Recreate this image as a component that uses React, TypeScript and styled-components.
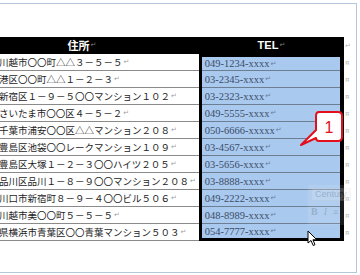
import React from "react";
import styled, { createGlobalStyle } from "styled-components";

const GlobalStyle = createGlobalStyle`
  html, body { margin: 0; padding: 0; background: #ffffff; }
  body { width: 360px; height: 275px; overflow: hidden; }
  #root { width: 360px; height: 275px; }
`;

const Screen = styled.div`
  width: 360px;
  height: 275px;
  padding-top: 3px;
  box-sizing: border-box;
  overflow: hidden;
  background: #ffffff;
`;

const Page = styled.div`
  position: relative;
  width: 357px;
  height: 270px;
  box-sizing: border-box;
  border-top: 1px solid #b7c7db;
  border-right: 1px solid #b7c7db;
  border-bottom: 1px solid #b7c7db;
  background: #ffffff;
  overflow: hidden;
  padding-top: 33px;
`;

const Table = styled.div`
  display: flex;
  align-items: flex-start;
  margin-left: -35px;
`;

const AddressColumn = styled.div`
  width: 235px;
  display: flex;
  flex-direction: column;
`;

const TelColumn = styled.div`
  width: 146px;
  display: flex;
  flex-direction: column;
`;

const EndColumn = styled.div`
  width: 12px;
  display: flex;
  flex-direction: column;
`;

const HeaderCell = styled.div<{ $latin?: boolean }>`
  height: 17px;
  background: #000000;
  color: #ffffff;
  display: flex;
  align-items: center;
  justify-content: center;
  font-family: ${(p) =>
    p.$latin
      ? `"Liberation Sans", Arial, sans-serif`
      : `"Noto Sans CJK JP", sans-serif`};
  font-weight: 700;
  font-size: 11px;
  line-height: 17px;
  white-space: nowrap;
`;

const AddressCell = styled.div`
  height: 17px;
  box-sizing: border-box;
  border-bottom: 1px solid #8a8a8a;
  padding-left: 5.5px;
  display: flex;
  align-items: center;
  font-family: "Noto Sans CJK JP", sans-serif;
  font-size: 9.5px;
  line-height: 16px;
  color: #1c1c1c;
  white-space: nowrap;
  overflow: hidden;
`;

const Selection = styled.div`
  border: 3px solid #000000;
  border-right-width: 4px;
  display: flex;
  flex-direction: column;
  background: #a9c9ef;
`;

const TelCell = styled.div`
  height: 17px;
  box-sizing: border-box;
  border-bottom: 1px solid #6d7d92;
  padding-left: 3px;
  display: flex;
  align-items: center;
  font-family: "Liberation Serif", "Times New Roman", serif;
  font-size: 10.5px;
  color: #3c4c66;
  white-space: nowrap;

  &:first-child {
    height: 14px;
  }
  &:last-child {
    height: 14px;
    border-bottom: none;
  }
`;

const EndCell = styled.div`
  height: 17px;
  display: flex;
  align-items: center;
  padding-left: 1px;
  font-family: "DejaVu Sans", sans-serif;
  font-size: 7px;
  color: #b4b4b4;
`;

const Mark = styled.span<{ $tone?: "light" | "dark" | "blue" }>`
  font-family: "DejaVu Sans", sans-serif;
  font-size: 7px;
  font-weight: 400;
  margin-left: 1px;
  color: ${(p) =>
    p.$tone === "dark" ? "#7a7a7a" : p.$tone === "blue" ? "#6b7c95" : "#a0a0a0"};
`;

const MiniToolbar = styled.div`
  position: absolute;
  left: 308px;
  top: 181px;
  width: 54px;
  height: 40px;
  opacity: 0.28;
  display: flex;
  flex-direction: column;
  gap: 5px;
  padding: 3px 0 0 3px;
  box-sizing: border-box;
  background: rgba(255, 255, 255, 0.35);
`;

const ToolRow = styled.div`
  display: flex;
  align-items: center;
  gap: 6px;
  font-family: "Liberation Sans", Arial, sans-serif;
  font-size: 9px;
  color: #6a6a6a;
`;

const FontBox = styled.span`
  display: inline-block;
  background: #f2f2f2;
  border: 1px solid #d8d8d8;
  padding: 0 3px;
  line-height: 11px;
`;

const ToolGlyph = styled.span<{ $italic?: boolean }>`
  font-weight: ${(p) => (p.$italic ? 400 : 700)};
  font-style: ${(p) => (p.$italic ? "italic" : "normal")};
  font-family: "Liberation Serif", serif;
  font-size: 10px;
  color: #6a6a6a;
`;

const Callout = styled.svg`
  position: absolute;
  left: 298px;
  top: 105px;
  overflow: visible;
`;

const Pointer = styled.svg`
  position: absolute;
  left: 307px;
  top: 226px;
`;

type Row = { address: string; tel: string };

const rows: Row[] = [
  { address: "埼玉県川越市〇〇町△△３－５－５", tel: "049-1234-xxxx" },
  { address: "東京都港区〇〇町△△１－２－３", tel: "03-2345-xxxx" },
  { address: "東京都新宿区１－９－５〇〇マンション１０２", tel: "03-2323-xxxx" },
  { address: "埼玉県さいたま市〇〇区４－５－２", tel: "049-5555-xxxx" },
  { address: "千葉県千葉市浦安〇〇区△△マンション２０８", tel: "050-6666-xxxxx" },
  { address: "東京都豊島区池袋〇〇レークマンション１０９", tel: "03-4567-xxxx" },
  { address: "東京都豊島区大塚１－２－３〇〇ハイツ２０５", tel: "03-5656-xxxx" },
  { address: "東京都品川区品川１－８－９〇〇マンション２０８", tel: "03-8888-xxxx" },
  { address: "埼玉県川口市新宿町８－９－４〇〇ビル５０６", tel: "049-2222-xxxx" },
  { address: "埼玉県川越市美〇〇町５－５－５", tel: "048-8989-xxxx" },
  { address: "神奈川県横浜市青葉区〇〇青葉マンション５０３", tel: "054-7777-xxxx" },
];

export default function App() {
  return (
    <Screen>
      <GlobalStyle />
      <Page>
        <Table>
          <AddressColumn>
            <HeaderCell>
              住所<Mark $tone="dark">↵</Mark>
            </HeaderCell>
            {rows.map((r) => (
              <AddressCell key={r.address}>
                {r.address}
                <Mark>↵</Mark>
              </AddressCell>
            ))}
          </AddressColumn>
          <TelColumn>
            <HeaderCell $latin>
              TEL<Mark $tone="dark">↵</Mark>
            </HeaderCell>
            <Selection>
              {rows.map((r) => (
                <TelCell key={r.tel + r.address}>
                  {r.tel}
                  <Mark $tone="blue">↵</Mark>
                </TelCell>
              ))}
            </Selection>
          </TelColumn>
          <EndColumn>
            <EndCell>↵</EndCell>
            {rows.map((r) => (
              <EndCell key={"end" + r.address}>¤</EndCell>
            ))}
          </EndColumn>
        </Table>

        <MiniToolbar>
          <ToolRow>
            <FontBox>Century</FontBox>
            <span>A</span>
          </ToolRow>
          <ToolRow>
            <ToolGlyph>B</ToolGlyph>
            <ToolGlyph $italic>I</ToolGlyph>
            <span>≡</span>
          </ToolRow>
        </MiniToolbar>

        <Callout width="48" height="40" viewBox="0 0 48 40">
          <path
            d="M21 3 H40 Q44 3 44 7 V28 Q44 32 40 32 H21 Q18 32 18 29 L3 36 L18 21 V7 Q18 3 21 3 Z"
            fill="#ffffff"
            stroke="#e3101c"
            strokeWidth="2"
            strokeLinejoin="round"
          />
          <text
            x="31"
            y="23.5"
            textAnchor="middle"
            fontFamily="Liberation Sans, Arial, sans-serif"
            fontSize="16"
            fill="#e3101c"
          >
            1
          </text>
        </Callout>

        <Pointer width="11" height="17" viewBox="0 0 11 17">
          <path
            d="M1 1 L1 13 L4 10.5 L6.2 15.5 L8 14.7 L5.9 9.8 L9.8 9.8 Z"
            fill="#ffffff"
            stroke="#000000"
            strokeWidth="1"
            strokeLinejoin="round"
          />
        </Pointer>
      </Page>
    </Screen>
  );
}
